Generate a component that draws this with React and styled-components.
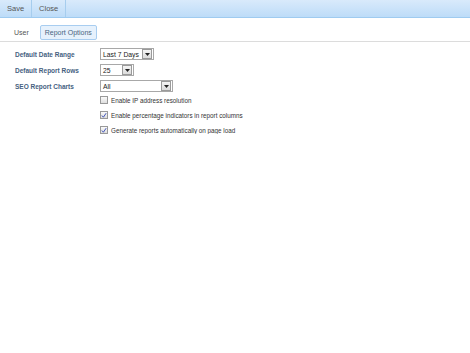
import React from "react";
import styled, { createGlobalStyle } from "styled-components";

const Global = createGlobalStyle`
  html, body { margin: 0; padding: 0; background: #fff; }
  body { font-family: "Liberation Sans", Arial, sans-serif; }
`;

const Toolbar = styled.div`
  display: flex;
  height: 17px;
  background: linear-gradient(#d9eafb, #bddcf8);
  border-bottom: 1px solid #9fcbf0;
`;

const ToolButton = styled.div`
  display: flex;
  align-items: center;
  padding: 0 7px;
  font-size: 7.5px;
  color: #555;
  border-right: 1px solid #a6cdee;
`;

const Tabs = styled.div`
  display: flex;
  align-items: center;
  gap: 6px;
  margin-top: 7px;
  padding: 0 0 1px 9px;
  border-bottom: 1px solid #dcdcdc;
`;

const Tab = styled.div`
  font-size: 7px;
  color: ${(p) => (p.$active ? "#4a6480" : "#555")};
  padding: 3px 4px;
  border: 1px solid ${(p) => (p.$active ? "#a8cdf0" : "transparent")};
  background: ${(p) => (p.$active ? "#e6f1fc" : "transparent")};
  border-radius: 2px;
  line-height: 7px;
`;

const Form = styled.div`
  display: grid;
  grid-template-columns: 85px auto;
  row-gap: 4px;
  padding: 6px 0 0 15px;
  align-items: center;
  justify-items: start;
`;

const Label = styled.div`
  font-size: 6.5px;
  font-weight: bold;
  color: #46617f;
`;

const Select = styled.div`
  display: flex;
  align-items: center;
  justify-content: space-between;
  box-sizing: border-box;
  width: ${(p) => p.$w}px;
  height: 12px;
  border: 1px solid #a8a8a8;
  background: #fff;
  padding: 0 1px 0 2px;
  font-size: 6.8px;
  color: #222;
`;

const Arrow = styled.div`
  display: flex;
  align-items: center;
  justify-content: center;
  width: 8px;
  height: 8px;
  border: 1px solid #9a9a9a;
  background: linear-gradient(#f4f4f4, #dcdcdc);
`;

const Checks = styled.div`
  grid-column: 2;
  display: flex;
  flex-direction: column;
  gap: 7px;
`;

const CheckRow = styled.label`
  display: flex;
  align-items: center;
  gap: 3px;
  font-size: 6.3px;
  color: #333;
`;

const Box = styled.span`
  display: flex;
  align-items: center;
  justify-content: center;
  box-sizing: border-box;
  width: 8px;
  height: 8px;
  border: 1px solid #999;
  background: linear-gradient(#fafafa, #dedede);
`;

const Tri = () => (
  <svg width="5" height="3" viewBox="0 0 5 3">
    <path d="M0 0h5L2.5 3z" fill="#222" />
  </svg>
);

const Tick = () => (
  <svg width="7" height="7" viewBox="0 0 7 7">
    <path d="M1 3.5L2.8 5.5L6 0.8" stroke="#3a4fb8" strokeWidth="1.1" fill="none" />
  </svg>
);

const Sel = ({ w, value }) => (
  <Select $w={w}>
    <span>{value}</span>
    <Arrow>
      <Tri />
    </Arrow>
  </Select>
);

const Check = ({ checked, children }) => (
  <CheckRow>
    <Box>{checked && <Tick />}</Box>
    {children}
  </CheckRow>
);

export default function App() {
  return (
    <>
      <Global />
      <Toolbar>
        <ToolButton>Save</ToolButton>
        <ToolButton>Close</ToolButton>
      </Toolbar>
      <Tabs>
        <Tab>User</Tab>
        <Tab $active>Report Options</Tab>
      </Tabs>
      <Form>
        <Label>Default Date Range</Label>
        <Sel w={54} value="Last 7 Days" />
        <Label>Default Report Rows</Label>
        <Sel w={34} value="25" />
        <Label>SEO Report Charts</Label>
        <Sel w={73} value="All" />
        <Checks>
          <Check>Enable IP address resolution</Check>
          <Check checked>Enable percentage indicators in report columns</Check>
          <Check checked>Generate reports automatically on page load</Check>
        </Checks>
      </Form>
    </>
  );
}
